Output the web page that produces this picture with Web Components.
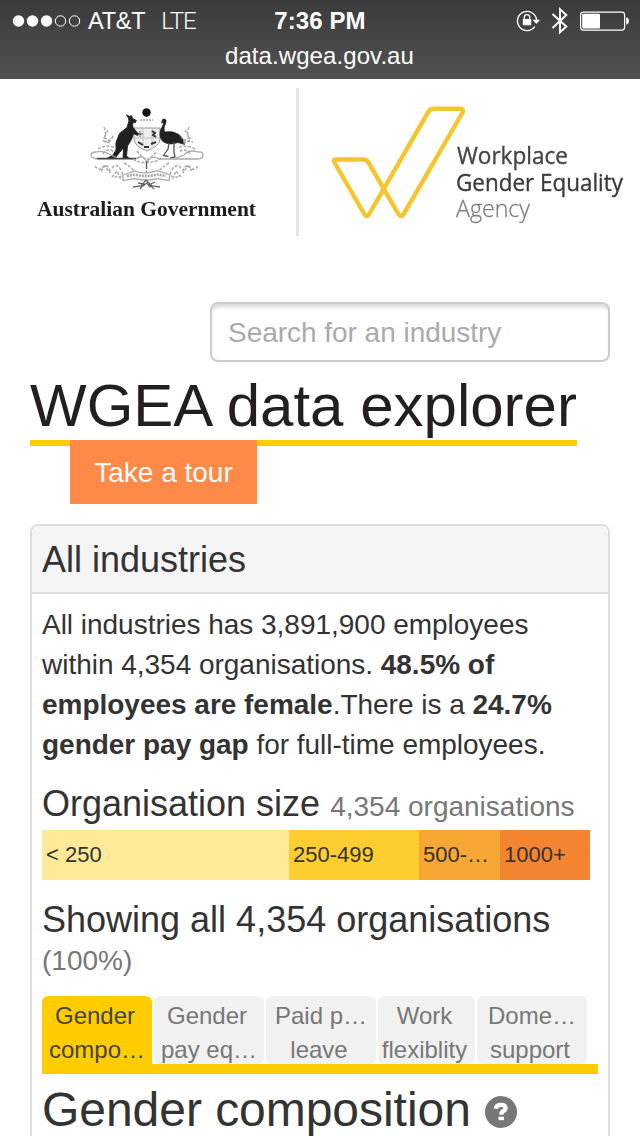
<!DOCTYPE html>
<html lang="en">
<head>
<meta charset="utf-8">
<title>WGEA data explorer</title>
<style>
html,body{margin:0;background:#fff}
body{width:640px;height:1136px;overflow:hidden;font-family:"Liberation Sans",Arial,sans-serif;color:#333}
</style>
</head>
<body>
<data-explorer></data-explorer>
<script>
const define = (name, html) => customElements.define(name, class extends HTMLElement {
  constructor() {
    super();
    this.attachShadow({ mode: 'open' }).innerHTML = html;
  }
});

define('status-bar', `
<style>
:host{display:block;height:79px;background:linear-gradient(#3b3b3b,#525252);color:#fff;font-size:24px;overflow:hidden}
.row{display:grid;grid-template-columns:1fr auto 1fr;height:40px;align-items:center}
.left,.right{display:flex;align-items:center}
.left{padding-left:12px}
.carrier{margin-left:7px;font-size:23.5px;line-height:40px;letter-spacing:-.25px}
.net{font-family:Roboto,sans-serif;font-weight:300;margin-left:16px;font-size:24px;letter-spacing:-1px;line-height:40px}
.time{font-weight:700;line-height:41px;letter-spacing:.1px}
.right{justify-content:flex-end;padding-right:10px}
.url{text-align:center;line-height:31px;height:31px;letter-spacing:.08px;padding-right:1px}
svg{display:block}
</style>
<div class="row">
 <div class="left">
  <svg width="69" height="14" viewBox="0 0 69 14"><g fill="#fff"><circle cx="6.5" cy="7" r="5.7"/><circle cx="20.5" cy="7" r="5.7"/><circle cx="34.5" cy="7" r="5.7"/></g><g fill="none" stroke="#fff"><circle cx="48.5" cy="7" r="5.2"/><circle cx="62.5" cy="7" r="5.2"/></g></svg>
  <span class="carrier">AT&amp;T</span><span class="net">LTE</span>
 </div>
 <span class="time">7:36 PM</span>
 <div class="right">
  <svg width="114" height="30" viewBox="516 5.500 114 30">
   <path d="M534.8 26.2A9.6 9.6 0 1 1 536.6 19.4" fill="none" stroke="#fff" stroke-width="1.4"/>
   <path d="M532.6 19.3H540L536.3 23.5Z" fill="#fff"/>
   <rect x="522.8" y="18.6" width="8.4" height="6.2" rx=".5" fill="#fff"/>
   <path d="M524.3 19V16.8a2.7 2.7 0 0 1 5.4 0V19" fill="none" stroke="#fff" stroke-width="1.3"/>
   <path d="M552.5 13.5L566.3 26L560 31.7V8.8L566.3 14.5L552.5 27.5" fill="none" stroke="#fff" stroke-width="2"/>
   <rect x="580.6" y="11.6" width="44" height="18" rx="2.8" fill="none" stroke="#fff" stroke-width="1.2"/>
   <rect x="582.2" y="13.2" width="17.8" height="14.8" rx="1" fill="#fff"/>
   <path d="M626.2 17h.8q2 .6 2 3.5t-2 3.5h-.8z" fill="#fff"/>
  </svg>
 </div>
</div>
<div class="url">data.wgea.gov.au</div>`);

define('gov-logo', `
<style>:host{display:block;width:300px;height:170px}svg{display:block}.soft{filter:blur(.7px)}</style>
<svg width="300" height="170" viewBox="0 79 300 170">
<g class="soft">
 <circle cx="146.500" cy="112.500" r="4.200" fill="#111"/>
 <path d="M140 120h13" stroke="#bbb" stroke-width="2.2" stroke-dasharray="2 1"/>
 <path d="M134 128h26v11q0 7-13 12q-13-5-13-12z" fill="#eee" stroke="#999"/>
 <path d="M134 138h26M143 128v18M152 128v18" stroke="#bbb" stroke-width=".9"/>
 <path d="M140 131v6m-3-3h6" stroke="#777" stroke-width="1.3"/>
 <path d="M152 131l3 2-2 2 3 2" stroke="#333" stroke-width="2" fill="none"/>
 <path d="M138 142l5 3M144 147h5M151 144l5-2" stroke="#333" stroke-width="2"/>
 <path d="M126.500 114.800L129.500 116.500 131.500 115.500 132.500 118.500 136.300 120.500 135.500 122.500 132.500 123 132.800 127 135 130 138.500 134 137.500 135.500 133.500 133.500 131.500 139.500 127.500 146 126.500 156 129.500 158.500H123L123.500 148 119.500 152.500 115.500 157.500 106 159 113 155 116 150 116 142.500 119.500 133.500 127 127.500 129 121 128.500 118Z" fill="#202020" stroke="#202020" stroke-width=".9" stroke-linejoin="round"/>
 <path d="M161.500 123L162.500 119.500Q164.500 118 166 120.200Q166.500 123 164.500 126Q163.500 129 164.500 132Q172 130.500 178 134Q184 138 184.500 144.500L178 142.500Q170 145.500 163.500 142Q158.500 138 160.500 130L163.300 124.500 163.200 122Z" fill="#202020" stroke="#202020" stroke-width=".7" stroke-linejoin="round"/>
 <path d="M169 143l-1 6-4.500 6.500 5 1M174 142v10l1 5-5 1" stroke="#555" stroke-width="1.3" fill="none"/>
 <path d="M97 159h39q8-6 11 4 4-9 12-4h39q5 0 5-4t-5-3q-9-3-14 3l-8 3M97 159q-6-1-6-4t5-3q7-2 13 2l8 4" fill="none" stroke="#aaa" stroke-width="1.3"/>
 <path d="M97 158.500h39" stroke="#444" stroke-width="1.3"/>
 <g fill="none" stroke="#aaa" stroke-width="1.5" stroke-dasharray="3 1.500">
  <path d="M104 127q3 7 0 11t7 5M108 130l-4 8 8 3M113 136l-3 5-8 1M98 149q8-5 18-1M103 154q5-7 11-2"/>
  <path d="M189 127q-3 7 0 11t-7 5M185 130l5 8-8 3M181 136l3 5 9 1M195 149q-8-5-18-1M190 154q-5-7-11-2"/>
  <path d="M95 166q4 6 8 1t8 6M101 171l4-5 5 7M112 168q4-6 9 2t-7 7M112 177l5-6 4 9M124 163q7 4 11 9"/>
  <path d="M198 166q-4 6-8 1t-8 6M192 171l-4-5-5 7M181 168q-4-6-9 2t7 7M181 177l-5-6-4 9M169 163q-7 4-11 9"/>
  <path d="M137 151q4 6 10 9 5-3 10-9M133 159q8 5 14 3 8 1 14-4M146.500 161v20"/>
 </g>
 <path d="M123 175l12-4q10 4 22-.4l13 4-1 6-12-2q-11 3-22 0l-12 2z" fill="#f8f8f8" stroke="#aaa" stroke-width="1.2"/>
 <path d="M127 176l8-1.500q11 3 22 0l9 1.500" fill="none" stroke="#aaa" stroke-width="2.500" stroke-dasharray="2 1"/>
 <path d="M133 187l8-1 5-6 6 6 8 1M138 183l6 1-4 5M155 182l-6 3 5 4M146.500 161v8M143 186l4-3 3 4" fill="none" stroke="#666" stroke-width="1.3"/>
 <text x="37" y="216" font-family="Liberation Serif,serif" font-weight="700" font-size="22" textLength="219" lengthAdjust="spacingAndGlyphs" fill="#1c1c1c">Australian Government</text>
</g>
<rect x="296" y="88" width="3" height="148" fill="#e8e8e8"/>
</svg>`);

define('wgea-logo', `
<style>:host{display:block;width:340px;height:170px}svg{display:block;filter:blur(.5px)}text{font-family:"Open Sans","Noto Sans",sans-serif}</style>
<svg width="340" height="170" viewBox="300 79 340 170">
 <path d="M335.500 159.500H363.500Q366.700 159.500 368.500 162.500L398 213.500Q401 218.500 404 213.500L462.600 112.500Q464.300 108.700 460 108.700H434Q430.200 108.700 428.200 112L369.500 213.500Q366.700 218.500 364 213.500L335 163.500Q333 159.500 335.500 159.500Z" fill="none" stroke="#f6c52b" stroke-width="4.400" stroke-linejoin="round"/>
 <text x="457" y="163.500" font-size="24" textLength="111" lengthAdjust="spacingAndGlyphs" fill="#444" stroke="#444" stroke-width=".35">Workplace</text>
 <text x="456" y="191" font-size="24" textLength="167" lengthAdjust="spacingAndGlyphs" fill="#3a3a3a" stroke="#3a3a3a" stroke-width=".35">Gender Equality</text>
 <text x="456" y="216.500" font-size="24" font-weight="300" textLength="74" lengthAdjust="spacingAndGlyphs" fill="#777" stroke="#888" stroke-width=".3">Agency</text>
</svg>`);

define('search-box', `
<style>
:host{display:block;box-sizing:border-box;width:400px;height:60px;border:2px solid #ccc;border-radius:8px;padding-left:16px;line-height:57px;font-size:28px;letter-spacing:-.03px;color:#aaa;box-shadow:inset 0 5px 4px -2px rgba(0,0,0,.16)}
</style><slot></slot>`);

define('page-title', `
<style>
:host{display:flex;flex-direction:column;align-items:flex-start}
h1{margin:0;font-size:60px;font-weight:400;line-height:62px;height:65px;border-bottom:6px solid #fc0;color:#231f20;width:547px;white-space:nowrap}
a{display:block;margin:-6px 0 0 40px;width:187px;height:64px;line-height:66px;background:#ff8a48;color:#fff;text-align:center;font-size:28px}
</style><h1><slot></slot></h1><a><slot name="action"></slot></a>`);

define('info-panel', `
<style>
:host{display:block;box-sizing:border-box;width:580px;height:640px;border:2px solid #ddd;border-radius:8px 8px 0 0;color:#333}
header{height:66px;line-height:67px;background:#f5f5f5;border-bottom:2px solid #ddd;border-radius:6px 6px 0 0;padding-left:10px;font-size:36px}
section{padding:11px 10px 0}
</style><header><slot name="title"></slot></header><section><slot></slot></section>`);

define('size-bar', `
<style>
:host{display:grid;grid-template-columns:247px 130px 81px 90px;height:50px;margin:6px 0 20px;font-size:22px;line-height:50px}
span{padding-left:4px;white-space:nowrap}
</style>
<span style="background:#fee999">&lt; 250</span><span style="background:#fecd30">250-499</span><span style="background:#f7a733">500-…</span><span style="background:#f38430">1000+</span>`);

define('tab-item', `
<style>
:host{display:block;box-sizing:border-box;width:110px;height:68px;padding:3px 4px 0 0;background:#f1f1f1;border-radius:6px;color:#777;font-size:24px;line-height:34px;text-align:center;white-space:nowrap}
:host([narrow]){width:97px}
:host([active]){background:#fc0;color:#444;border-radius:6px 6px 0 0}
::slotted(span){margin-right:-4px}
</style><slot></slot>`);

define('tab-strip', `
<style>
:host{display:flex;gap:2px;width:556px;height:68px;margin-top:15px;border-bottom:10px solid #fc0}
</style><slot></slot>`);

define('help-icon', `
<style>:host{display:block;width:32px;height:32px}svg{display:block}</style>
<svg width="32" height="32"><circle cx="16" cy="16" r="16" fill="#777"/>
<path d="M10.700 12.700Q11.200 8.800 16 8.800Q20.600 8.800 20.600 12Q20.600 13.900 18.300 15Q16.300 16 16.300 18.800" fill="none" stroke="#fff" stroke-width="4.200"/><rect x="13.500" y="20.700" width="5.500" height="3.500" fill="#fff"/></svg>`);

define('data-explorer', `
<style>
:host{display:block}
.logos{display:flex;height:170px}
main{padding:0 30px}
.search{display:flex;justify-content:flex-end;padding-top:53px}
page-title{margin-top:13px}
info-panel{margin-top:20px}
p{margin:0;font-size:28px;line-height:40px;white-space:nowrap;letter-spacing:-.02px}
h4{margin:0;font-size:36px;font-weight:400;line-height:40px;height:40px;white-space:nowrap}
small{font-size:28px;color:#777;font-weight:400}
.org{margin-top:19px}
.pct{display:block;line-height:40px;height:40px;margin-top:1px}
.heading{display:flex;align-items:center;gap:14px;margin-top:9px}
h3{margin:0;font-size:48px;font-weight:400;line-height:54px;letter-spacing:-.04px}
help-icon{margin-top:3px}
</style>
<status-bar></status-bar>
<div class="logos"><gov-logo></gov-logo><wgea-logo></wgea-logo></div>
<main>
<div class="search"><search-box>Search for an industry</search-box></div>
<page-title>WGEA data explorer<span slot="action">Take a tour</span></page-title>
<info-panel><span slot="title">All industries</span>
<p>All industries has 3,891,900 employees<br>within 4,354 organisations. <b>48.5% of<br>employees are female</b>.There is a <b>24.7%<br>gender pay gap</b> for full-time employees.</p>
<h4 class="org">Organisation size <small>4,354 organisations</small></h4>
<size-bar></size-bar>
<h4>Showing all 4,354 organisations</h4>
<small class="pct">(100%)</small>
<tab-strip>
<tab-item active>Gender<br><span>compo…</span></tab-item><tab-item>Gender<br><span>pay eq…</span></tab-item><tab-item><span>Paid p…</span><br>leave</tab-item><tab-item narrow>Work<br>flexiblity</tab-item><tab-item><span>Dome…</span><br>support</tab-item>
</tab-strip>
<div class="heading"><h3>Gender composition</h3><help-icon></help-icon></div>
</info-panel>
</main>`);
</script>
</body>
</html>
